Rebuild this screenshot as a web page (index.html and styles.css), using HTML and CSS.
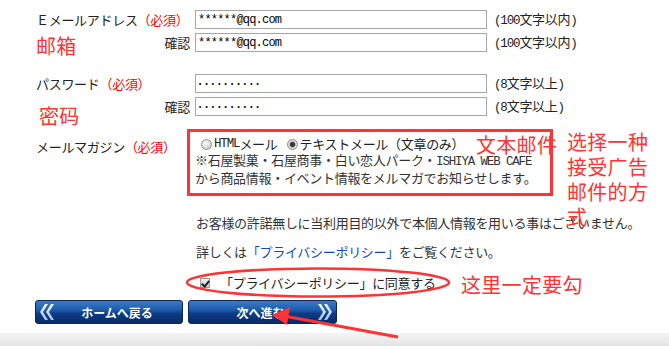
FILE: index.html
```html
<!DOCTYPE html>
<html lang="ja">
<head>
<meta charset="utf-8">
<title>会員登録</title>
<link rel="stylesheet" href="styles.css">
</head>
<body>
<div class="page">
  <form class="form">
    <div class="group">
      <div class="label">Ｅメールアドレス<span class="req">（必須）</span></div>
      <input class="input" type="text" value="******@qq.com">
      <div class="note"><span class="hw">(100</span>文字以内<span class="hw">)</span></div>
      <div class="label confirm">確認</div>
      <input class="input" type="text" value="******@qq.com">
      <div class="note"><span class="hw">(100</span>文字以内<span class="hw">)</span></div>
    </div>
    <div class="group">
      <div class="label">パスワード<span class="req">（必須）</span></div>
      <input class="input pw" type="password" value="abcdefghij">
      <div class="note"><span class="hw">(8</span>文字以上<span class="hw">)</span></div>
      <div class="label confirm">確認</div>
      <input class="input pw" type="password" value="abcdefghij">
      <div class="note"><span class="hw">(8</span>文字以上<span class="hw">)</span></div>
    </div>
    <div class="magazine">
      <div class="label mag-label">メールマガジン<span class="req">（必須）</span></div>
      <div class="box">
        <div class="options">
          <label class="opt"><input class="radio" type="radio" name="mag"><span class="hw">HTML</span>メール</label>
          <label class="opt"><input class="radio" type="radio" name="mag" checked>テキストメール（文章のみ）</label>
        </div>
        <p class="box-text">※石屋製菓・石屋商事・白い恋人パーク・<span class="hw">ISHIYA WEB CAFE</span><br>から商品情報・イベント情報をメルマガでお知らせします。</p>
      </div>
    </div>
    <p class="notice first">お客様の許諾無しに当利用目的以外で本個人情報を用いる事はございません。</p>
    <p class="notice">詳しくは<a class="link" href="#">「プライバシーポリシー」</a>をご覧ください。</p>
    <label class="agree"><input class="check" type="checkbox" checked>「プライバシーポリシー」に同意する</label>
    <div class="buttons">
      <button class="btn btn-back" type="button">
        <svg class="chev" width="14" height="18" viewBox="0 0 14 18"><defs><linearGradient id="cg1" x1="0" y1="0" x2="0" y2="1"><stop offset="0" stop-color="#f4f8ff"/><stop offset="1" stop-color="#9cc0ea"/></linearGradient></defs><polygon points="5,1 8,1 3,9 8,17 5,17 0,9" fill="url(#cg1)"/><polygon points="11,1 14,1 9,9 14,17 11,17 6,9" fill="url(#cg1)"/></svg>
        <span class="btn-text">ホームへ戻る</span>
      </button>
      <button class="btn btn-next" type="button">
        <span class="btn-text">次へ進む</span>
        <svg class="chev" width="14" height="18" viewBox="0 0 14 18"><defs><linearGradient id="cg2" x1="0" y1="0" x2="0" y2="1"><stop offset="0" stop-color="#f4f8ff"/><stop offset="1" stop-color="#9cc0ea"/></linearGradient></defs><polygon points="0,1 3,1 8,9 3,17 0,17 5,9" fill="url(#cg2)"/><polygon points="6,1 9,1 14,9 9,17 6,17 11,9" fill="url(#cg2)"/></svg>
      </button>
    </div>
  </form>
  <div class="footer"></div>

  <span class="mark mark-mail">邮箱</span>
  <span class="mark mark-pass">密码</span>
  <span class="mark mark-text">文本邮件</span>
  <span class="mark mark-choose">选择一种接受广告邮件的方式</span>
  <span class="mark mark-must">这里一定要勾</span>
  <svg class="marks" width="669" height="346" viewBox="0 0 669 346">
    <ellipse cx="318" cy="282.5" rx="131" ry="14" fill="none" stroke="#f33" stroke-width="2.5"/>
    <line x1="398" y1="337" x2="284" y2="316" stroke="#f33" stroke-width="3"/>
    <polygon points="272,315 290,307 287,325" fill="#f33"/>
  </svg>
</div>
</body>
</html>
```

FILE: styles.css
```css
* { box-sizing: border-box; }

body {
  margin: 0;
  background: #fff;
  font-family: "Noto Sans CJK JP", sans-serif;
  font-size: 13px;
  line-height: 16px;
  letter-spacing: -0.3px;
  color: #222;
}

.page {
  position: relative;
  width: 669px;
  height: 346px;
  overflow: hidden;
}

.form {
  margin: 0;
  padding: 10px 0 0 36px;
}

.hw {
  font-family: "Liberation Mono", monospace;
  font-size: 12.5px;
  letter-spacing: -1.15px;
}

.group {
  display: grid;
  grid-template-columns: 159px 292px auto;
  row-gap: 4px;
  align-items: center;
}

.group + .group { margin-top: 22px; }

.label { white-space: nowrap; }

.confirm {
  text-align: right;
  padding-right: 5px;
}

.req { color: #f00; }

.input {
  width: 292px;
  height: 19px;
  margin: 0;
  border: 1px solid #a6a6a6;
  padding: 0 2px;
  font-family: "Liberation Mono", monospace;
  font-size: 12px;
  letter-spacing: -0.8px;
  color: #000;
  background: #fff;
  outline: none;
}

.input.pw {
  font-size: 7px;
  letter-spacing: 2.2px;
}

.note { padding-left: 7px; white-space: nowrap; }

.magazine {
  display: flex;
  margin-top: 13px;
}

.mag-label {
  width: 151px;
  padding-top: 10px;
}

.box {
  width: 366px;
  height: 67px;
  border: 3px solid #f33;
  padding: 4px 0 0 5px;
}

.options {
  display: flex;
  align-items: center;
  height: 16px;
}

.opt {
  display: flex;
  align-items: center;
  white-space: nowrap;
  color: #222;
}

.radio {
  appearance: none;
  -webkit-appearance: none;
  width: 11px;
  height: 11px;
  margin: 0 2px 0 6px;
  border: 1px solid #8d8d8d;
  border-radius: 50%;
  background: radial-gradient(circle at 40% 35%, #ffffff 0, #e2e2e2 45%, #b9b9b9 100%);
}

.opt + .opt .radio { margin-left: 9px; }

.radio:checked {
  background: radial-gradient(circle, #3c3c3c 0, #3c3c3c 2.2px, #9a9a9a 2.8px, #e6e6e6 3.4px, #c4c4c4 100%);
}

.box-text {
  margin: 0;
  color: #333;
  white-space: nowrap;
}

.notice {
  margin: 13px 0 0 160px;
  color: #333;
  white-space: nowrap;
}

.notice.first { margin-top: 19px; }

.link {
  color: #1144d0;
  text-decoration: none;
}

.agree {
  display: flex;
  align-items: center;
  margin: 15px 0 0 159px;
  height: 16px;
  color: #222;
  white-space: nowrap;
}

.check {
  appearance: none;
  -webkit-appearance: none;
  position: relative;
  width: 10px;
  height: 10px;
  margin: 0 10px 0 5px;
  border: 1px solid #9a9a9a;
  background: linear-gradient(#f2f2f2, #c9c9c9);
}

.check:checked::after {
  content: "";
  position: absolute;
  left: 2px;
  top: 0;
  width: 3px;
  height: 6px;
  border-right: 2px solid #222;
  border-bottom: 2px solid #222;
  transform: rotate(40deg);
}

.buttons {
  display: flex;
  gap: 5px;
  margin: 9px 0 0 -1px;
}

.btn {
  display: flex;
  align-items: center;
  width: 148px;
  height: 24px;
  margin: 0;
  padding: 0 4px;
  border: 1px solid #0c2658;
  border-radius: 3px;
  background: linear-gradient(#3a7cc8 0%, #1d5aa8 42%, #0d3a85 58%, #0a2b68 100%);
  color: #fff;
  font-family: "Noto Sans CJK JP", sans-serif;
  font-size: 12px;
  font-weight: bold;
  letter-spacing: 0;
  cursor: pointer;
}

.btn-next { width: 149px; }

.chev { flex: none; }

.btn-text {
  flex: 1;
  text-align: center;
}

.btn-back .btn-text { padding-left: 2px; }
.btn-next .btn-text { padding-left: 10px; }

.footer {
  margin-top: 9px;
  height: 13px;
  background: linear-gradient(#f4f4f4, #e4e4e4);
}

.mark {
  position: absolute;
  font-family: "Noto Sans CJK SC", sans-serif;
  font-size: 20px;
  line-height: 24px;
  letter-spacing: 0.3px;
  color: #ff3333;
  white-space: nowrap;
}

.mark-mail { left: 36px; top: 34px; }
.mark-pass { left: 39px; top: 104px; }
.mark-text { left: 476px; top: 133px; }
.mark-choose {
  left: 567px;
  top: 129px;
  width: 86px;
  white-space: normal;
  line-height: 25px;
}
.mark-must { left: 461px; top: 273px; }

.marks {
  position: absolute;
  left: 0;
  top: 0;
  pointer-events: none;
}
```
